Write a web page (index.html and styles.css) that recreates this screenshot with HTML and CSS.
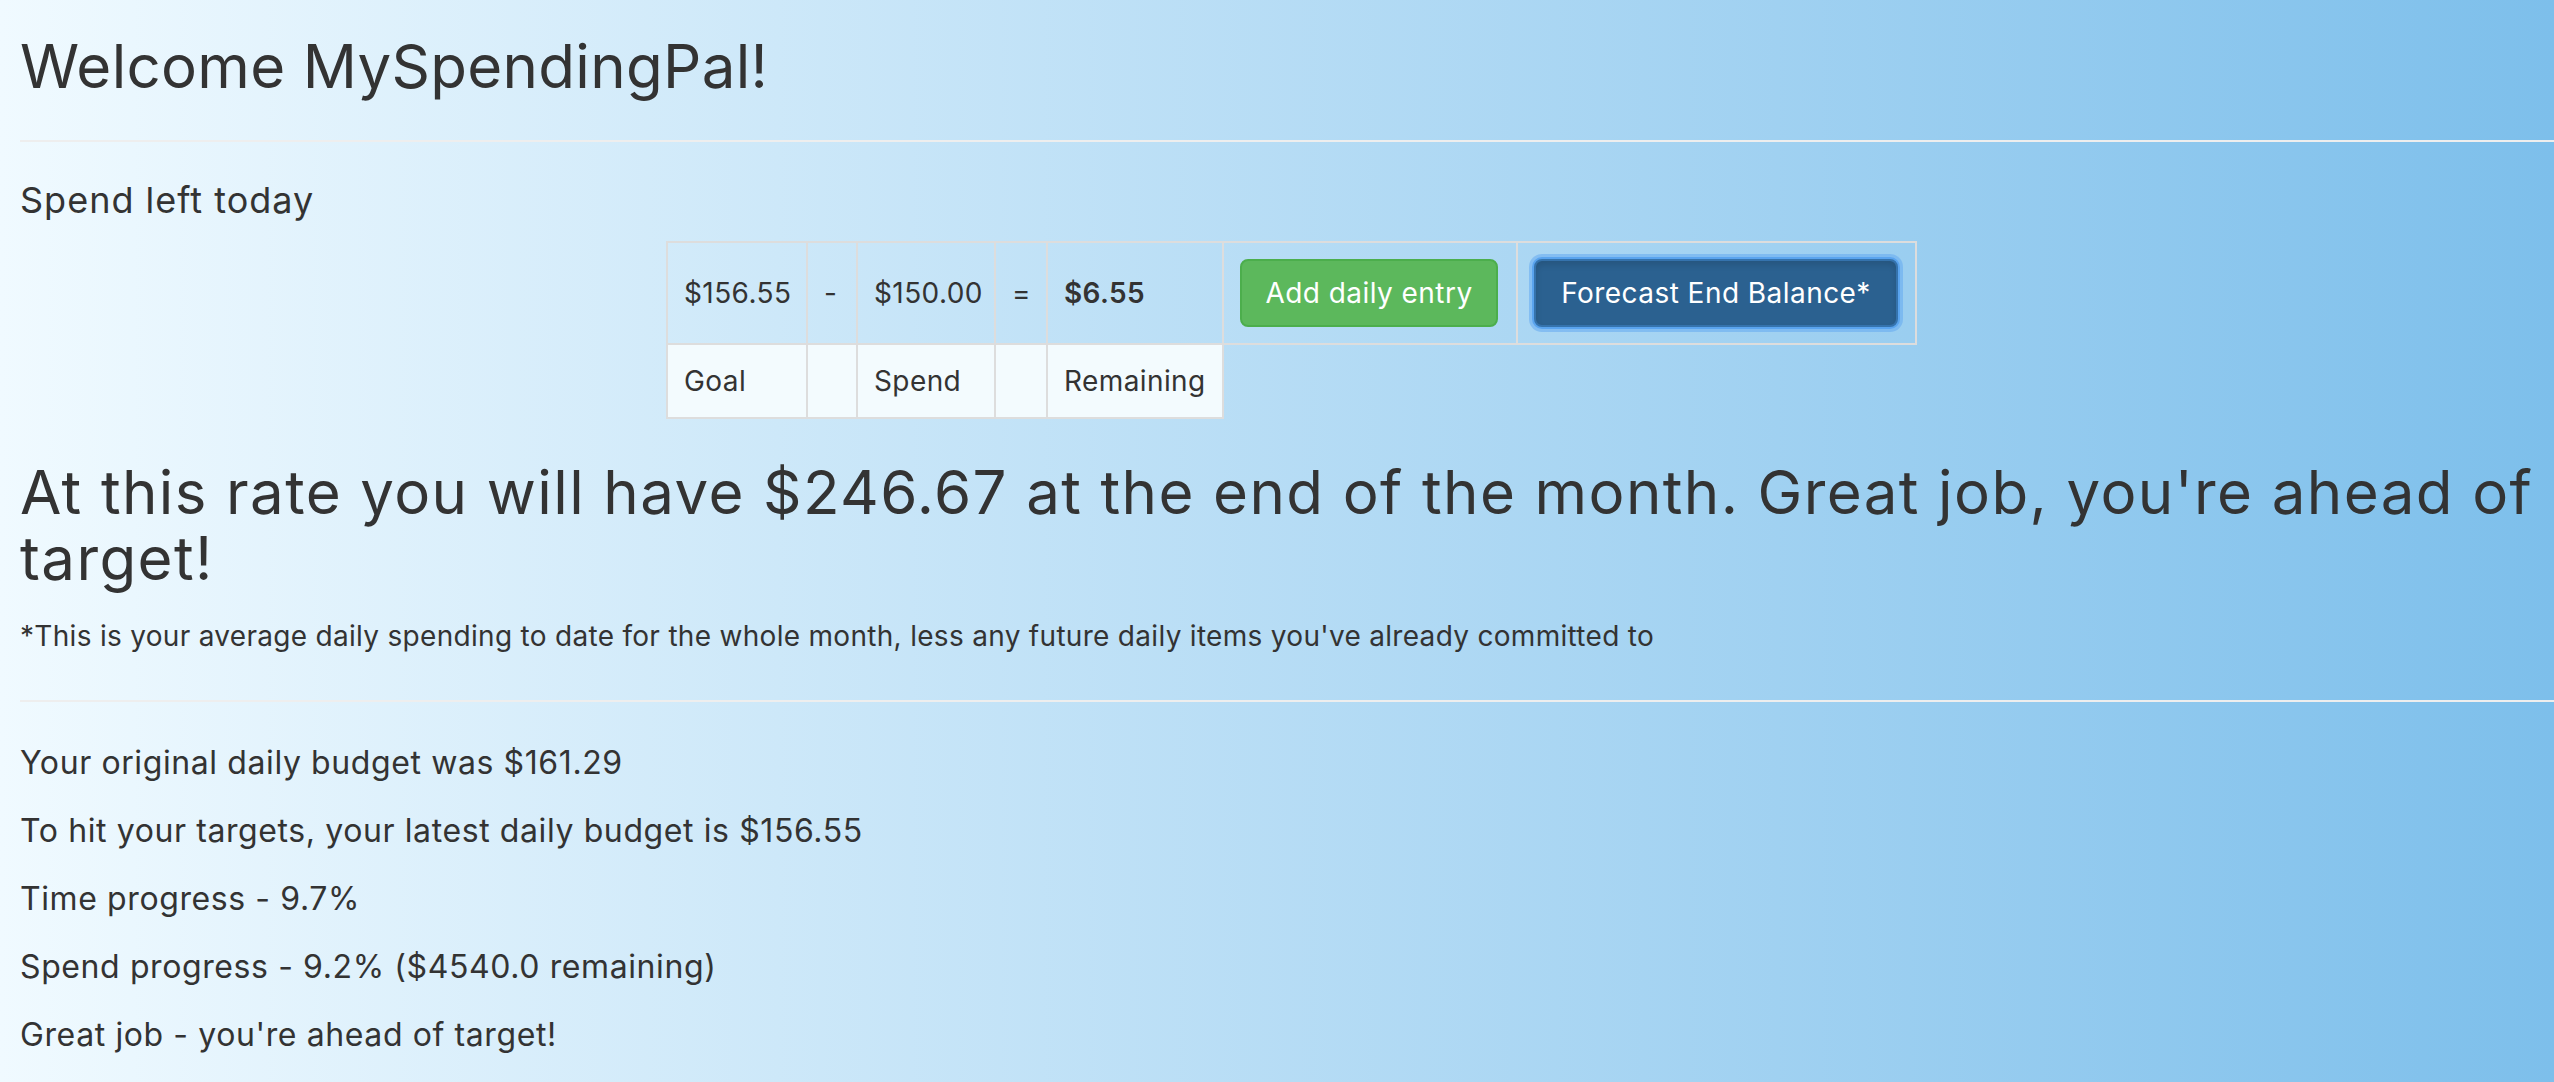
FILE: index.html
```html
<!DOCTYPE html>
<html lang="en">
<head>
<meta charset="utf-8">
<title>MySpendingPal</title>
<link rel="stylesheet" href="styles.css">
</head>
<body>
<div class="page">
  <h2 class="title">Welcome MySpendingPal!</h2>
  <hr class="rule rule-top">
  <h4 class="subtitle">Spend left today</h4>
  <table class="spend-table">
    <colgroup>
      <col class="c-goal"><col class="c-op"><col class="c-spend"><col class="c-op2"><col class="c-rem"><col class="c-add"><col class="c-fc">
    </colgroup>
    <tr class="row-values">
      <td>$156.55</td>
      <td>-</td>
      <td>$150.00</td>
      <td>=</td>
      <td class="strong">$6.55</td>
      <td><button class="btn btn-success">Add daily entry</button></td>
      <td><button class="btn btn-primary">Forecast End Balance*</button></td>
    </tr>
    <tr class="row-labels">
      <td>Goal</td>
      <td></td>
      <td>Spend</td>
      <td></td>
      <td>Remaining</td>
    </tr>
  </table>
  <h2 class="forecast">At this rate you will have $246.67 at the end of the month. Great job, you're ahead of target!</h2>
  <p class="footnote">*This is your average daily spending to date for the whole month, less any future daily items you've already committed to</p>
  <hr class="rule rule-mid">
  <p class="stat">Your original daily budget was $161.29</p>
  <p class="stat">To hit your targets, your latest daily budget is $156.55</p>
  <p class="stat">Time progress - 9.7%</p>
  <p class="stat">Spend progress - 9.2% ($4540.0 remaining)</p>
  <p class="stat">Great job - you're ahead of target!</p>
</div>
</body>
</html>
```

FILE: styles.css
```css
* { box-sizing: border-box; }
html, body { margin: 0; padding: 0; }
body {
  min-height: 1082px;
  background: linear-gradient(to right, #f0faff 0%, #7dbfeb 100%);
  font-family: Inter, "Open Sans", sans-serif;
  color: #333333;
  font-size: 28px;
  line-height: 40px;
}
.page { padding: 1px 0 0 20px; }
.title {
  font-size: 60px; line-height: 66px; font-weight: 400;
  letter-spacing: 0.3px;
  margin: 32px 0 0 0;
}
.rule { border: 0; border-top: 2px solid #eeeeee; height: 0; margin: 0; }
.rule-top { margin-top: 41px; }
.subtitle {
  font-size: 36px; line-height: 40px; font-weight: 400;
  letter-spacing: 1px;
  margin: 38px 0 0 0;
}
.spend-table {
  margin: 21px 0 0 646px;
  border-collapse: collapse;
  table-layout: fixed;
  width: 1249px;
  letter-spacing: 0.4px;
}
.c-goal { width: 140px; } .c-op { width: 50px; } .c-spend { width: 138px; } .c-op2 { width: 52px; }
.c-rem { width: 176px; } .c-add { width: 294px; } .c-fc { width: 399px; }
.spend-table td {
  border: 2px solid #dddddd;
  padding: 16px;
  vertical-align: middle;
  white-space: nowrap;
}
.row-labels td { background: #f3fbfe; }
.strong { font-weight: 600; }
.btn {
  font-family: inherit; font-size: 28px; line-height: 40px;
  letter-spacing: 0.45px;
  padding: 12px 0; border-radius: 8px; border: 2px solid transparent;
  color: #ffffff; text-align: center; display: block;
}
.btn-success { background: #5cb85c; border-color: #4cae4c; width: 258px; }
.btn-primary {
  background: #2b6190; border-color: #3573ad; width: 364px;
  box-shadow: inset 0 4px 6px rgba(0,0,0,0.12), 0 0 0 2px #5aa4ee, 0 0 0 5px rgba(100,170,240,0.55);
}
.forecast {
  font-size: 60px; line-height: 66px; font-weight: 400;
  letter-spacing: 1.4px;
  margin: 40px 0 0 0;
}
.footnote { margin: 25px 0 0 0; font-size: 28px; line-height: 40px; letter-spacing: 0.3px; }
.rule-mid { margin-top: 44px; }
.stat { font-size: 32px; line-height: 48px; margin: 0 0 20px 0; letter-spacing: 0.6px; }
.rule-mid + .stat { margin-top: 37px; }
```
